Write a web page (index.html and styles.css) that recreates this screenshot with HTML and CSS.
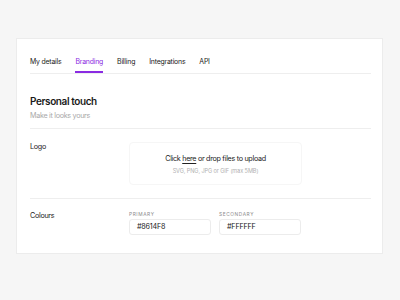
FILE: index.html
```html
<!DOCTYPE html>
<html>
<head>
<meta charset="utf-8">
<link rel="stylesheet" href="styles.css">
</head>
<body>
<div class="card">
  <nav class="tabs">
    <span class="tab">My details</span>
    <span class="tab active">Branding</span>
    <span class="tab">Billing</span>
    <span class="tab">Integrations</span>
    <span class="tab">API</span>
  </nav>
  <div class="head">
    <h1>Personal touch</h1>
    <p>Make it looks yours</p>
  </div>
  <div class="row logo-row">
    <div class="label">Logo</div>
    <div class="drop">
      <div class="drop-main">Click <u>here</u> or drop files to upload</div>
      <div class="drop-sub">SVG, PNG, JPG or GIF (max 5MB)</div>
    </div>
  </div>
  <div class="row colour-row">
    <div class="label">Colours</div>
    <div class="fields">
      <div class="field">
        <div class="cap">PRIMARY</div>
        <div class="input">#8614F8</div>
      </div>
      <div class="field">
        <div class="cap">SECONDARY</div>
        <div class="input">#FFFFFF</div>
      </div>
    </div>
  </div>
</div>
</body>
</html>
```
FILE: styles.css
```css
* { box-sizing: border-box; margin: 0; padding: 0; }
html, body { width: 400px; height: 300px; }
body {
  background: #f6f6f6;
  font-family: Inter, "Noto Sans", sans-serif;
  color: #1a1a1a;
  padding: 38px 17px 0 16px;
}
.card {
  background: #fff;
  border: 1px solid #ececec;
  width: 367px;
  height: 216px;
  padding: 0 11px 0 13px;
}
.tabs {
  display: flex;
  gap: 14px;
  padding-top: 18px;
  border-bottom: 1px solid #eeeeee;
  height: 35px;
}
.tab {
  font-size: 6.9px;
  line-height: 10px;
  height: 16px;
  color: #222;
  letter-spacing: -0.2px;
}
.tab.active {
  color: #8a2be2;
  border-bottom: 2px solid #8a2be2;
}
.head {
  padding-top: 20px;
  height: 55px;
  border-bottom: 1px solid #eeeeee;
}
.head h1 {
  font-size: 10px;
  font-weight: 600;
  line-height: 14px;
  letter-spacing: -0.4px;
}
.head p {
  font-size: 7.2px;
  line-height: 12px;
  color: #a8a8a8;
  margin-top: 2px;
  letter-spacing: -0.3px;
}
.row { display: flex; }
.label {
  width: 99px;
  font-size: 7.2px;
  line-height: 10px;
  color: #222;
  letter-spacing: -0.3px;
}
.logo-row {
  height: 70px;
  padding-top: 13px;
  border-bottom: 1px solid #eeeeee;
}
.drop {
  width: 173px;
  height: 43px;
  border: 1px solid #f6f6f6;
  border-radius: 4px;
  text-align: center;
  padding-top: 11px;
}
.drop-main { font-size: 7.2px; line-height: 10px; color: #222; letter-spacing: -0.3px; }
.drop-main u { text-decoration-thickness: 0.5px; text-underline-offset: 1.5px; }
.drop-sub { font-size: 5.6px; line-height: 9px; color: #b0b0b0; margin-top: 3px; letter-spacing: -0.1px; }
.colour-row { padding-top: 12px; }
.fields { display: flex; gap: 8px; }
.field { width: 82px; }
.cap {
  font-size: 4.8px;
  letter-spacing: 0.6px;
  color: #8a8a8a;
  line-height: 7px;
  height: 8px;
}
.input {
  height: 16px;
  border: 1px solid #ececec;
  border-radius: 3px;
  font-size: 7.2px;
  line-height: 14px;
  padding-left: 7px;
  color: #222;
  letter-spacing: -0.2px;
}
```
